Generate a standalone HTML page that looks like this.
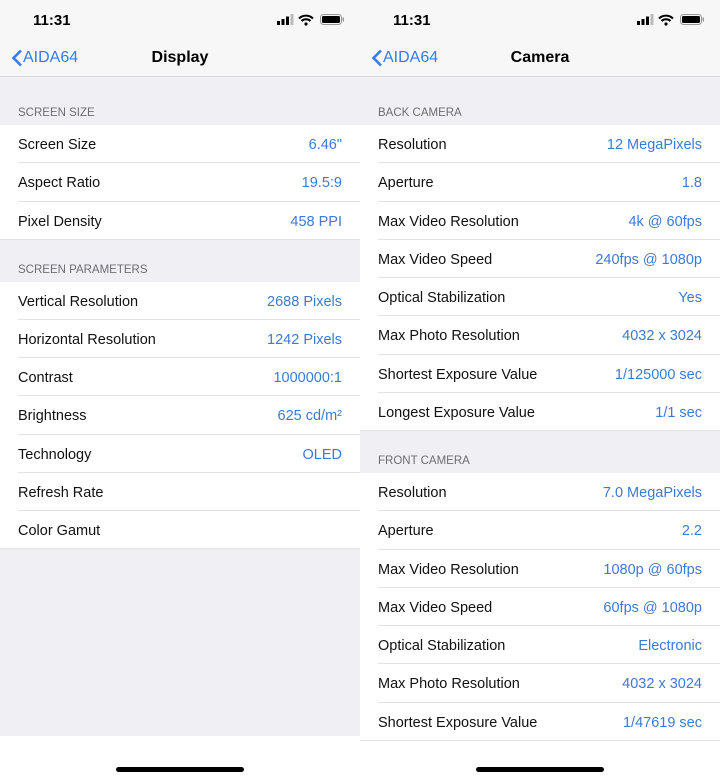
<!DOCTYPE html><html><head><style>
*{margin:0;padding:0;box-sizing:border-box}
body{width:720px;height:779px;position:relative;font-family:"Liberation Sans",sans-serif;background:#efeff4;overflow:hidden}
.p{position:absolute;top:0;width:360px;height:779px;background:#efeff4}
.nav{position:absolute;top:0;left:0;width:360px;height:77px;background:#f7f7f8;border-bottom:1px solid #d8d8dc}
.time{position:absolute;left:33px;top:12px;font-size:15px;font-weight:bold;color:#000}
.back{position:absolute;left:10px;top:49px;font-size:16px;color:#2f7cf6}
.title{position:absolute;left:0;width:360px;text-align:center;top:49px;font-size:16px;font-weight:bold;color:#000}
.hdr{position:absolute;left:18px;font-size:11.5px;color:#6d6d72}
.row{position:absolute;left:0;width:360px;height:38.25px;background:#fff}
.row .l{position:absolute;left:18px;top:12px;font-size:14.5px;color:#111}
.row .v{position:absolute;right:18px;top:12px;font-size:14.5px;color:#3b7bd4}
.row:after{content:"";position:absolute;left:18px;right:0;bottom:0;border-bottom:1px solid #e2e2e6}
.row.last:after{left:0}
.home{position:absolute;bottom:7px;left:116px;width:128px;height:5px;border-radius:3px;background:#000}
.bot{position:absolute;left:0;width:360px;top:736px;height:43px;background:#fff}
</style></head><body>
<div class="p" style="left:0" id="a"></div>
<div class="p" style="left:360px" id="b"></div>
<script>
function build(id,title,sections){
 var p=document.getElementById(id),h='<div class="bot"></div><div class="nav"><div class="time">11:31</div>'+
 '<svg style="position:absolute;left:277px;top:14px" width="70" height="12"><rect x="0" y="7" width="3" height="4" fill="#000"/><rect x="4.5" y="5" width="3" height="6" fill="#000"/><rect x="9" y="2.5" width="3" height="8.5" fill="#000"/><rect x="13.5" y="0" width="3" height="11" fill="#bbb"/>'+
 '<path d="M22 4.5a10 10 0 0 1 14 0M24.5 7a6.5 6.5 0 0 1 9 0" stroke="#000" stroke-width="2" fill="none"/><circle cx="29" cy="10" r="1.6" fill="#000"/>'+
 '<rect x="43.5" y="0.5" width="21" height="10" rx="3" fill="none" stroke="#999"/><rect x="45" y="2" width="18" height="7" rx="1.5" fill="#000"/><rect x="65.5" y="3.5" width="1.5" height="4" fill="#999"/></svg>'+
 '<svg style="position:absolute;left:11px;top:49px" width="12" height="18"><path d="M10 1.5L2.5 9 10 16.5" stroke="#2f7cf6" stroke-width="2.5" fill="none"/></svg>'+
 '<div class="back" style="left:23px">AIDA64</div><div class="title">'+title+'</div></div>';
 sections.forEach(function(s){
  h+='<div class="hdr" style="top:'+(s.y-18)+'px">'+s.h+'</div>';
  s.r.forEach(function(r,i){h+='<div class="row'+(i==s.r.length-1?' last':'')+'" style="top:'+(s.y+i*38.25)+'px"><span class="l">'+r[0]+'</span><span class="v">'+(r[1]||'')+'</span></div>';});
 });
 h+='<div class="home"></div>';p.innerHTML=h;
}
build('a','Display',[{h:'SCREEN SIZE',y:125,r:[['Screen Size','6.46"'],['Aspect Ratio','19.5:9'],['Pixel Density','458 PPI']]},
{h:'SCREEN PARAMETERS',y:281.5,r:[['Vertical Resolution','2688 Pixels'],['Horizontal Resolution','1242 Pixels'],['Contrast','1000000:1'],['Brightness','625 cd/m²'],['Technology','OLED'],['Refresh Rate',''],['Color Gamut','']]}]);
build('b','Camera',[{h:'BACK CAMERA',y:125,r:[['Resolution','12 MegaPixels'],['Aperture','1.8'],['Max Video Resolution','4k @ 60fps'],['Max Video Speed','240fps @ 1080p'],['Optical Stabilization','Yes'],['Max Photo Resolution','4032 x 3024'],['Shortest Exposure Value','1/125000 sec'],['Longest Exposure Value','1/1 sec']]},
{h:'FRONT CAMERA',y:473,r:[['Resolution','7.0 MegaPixels'],['Aperture','2.2'],['Max Video Resolution','1080p @ 60fps'],['Max Video Speed','60fps @ 1080p'],['Optical Stabilization','Electronic'],['Max Photo Resolution','4032 x 3024'],['Shortest Exposure Value','1/47619 sec']]}]);
</script>
</body></html>
